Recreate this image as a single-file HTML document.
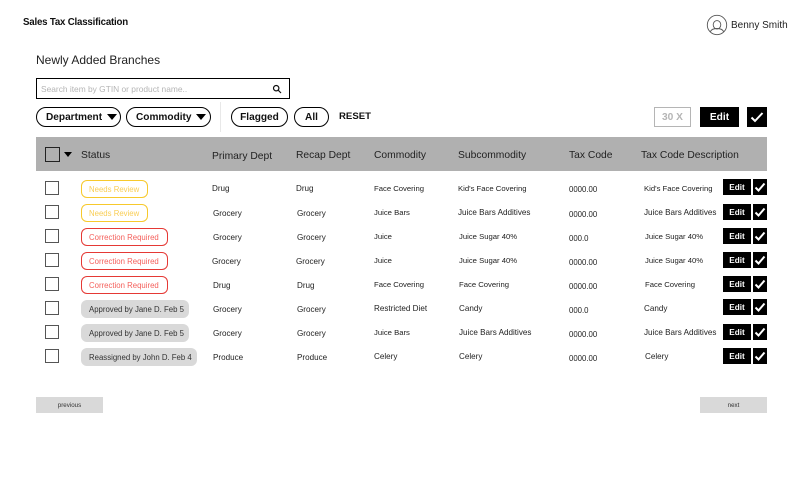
<!DOCTYPE html>
<html><head><meta charset="utf-8"><style>
html,body{margin:0;padding:0;background:#fff}
body{position:relative;width:804px;height:488px;overflow:hidden;font-family:"Liberation Sans",sans-serif;color:#111}
div,span{position:absolute;box-sizing:border-box;white-space:nowrap}
.t{font-size:8.1px;line-height:12px;height:12px;color:#222;margin-top:1px}
.s{font-size:7.7px}
.d{font-size:7.8px}
.h{font-size:10.3px;line-height:14px;height:14px;color:#222;top:148px;margin-top:1px}
.cb{left:45px;width:14px;height:14px;border:1px solid #555;background:#fff}
.p{left:81px;height:18px;border-radius:6px;font-size:7.8px;line-height:17px;padding-left:7px}
.y{width:67px;border:1px solid #f7c92c;color:#f9ce55}
.r{width:87px;border:1px solid #e53935;color:#f4605c}
.g{background:#d9d9d9;color:#333;line-height:19px;padding-left:8px}
.f{top:107px;height:20px;border:1px solid #000;border-radius:10px;font-size:10.1px;font-weight:bold;line-height:20px;text-align:center;color:#111}
.l{font-size:10.1px;font-weight:bold;line-height:14px;color:#111;top:111px}
.c{width:0;height:0;border-left:5px solid transparent;border-right:5px solid transparent;border-top:6px solid #000}
.e{left:723px;width:28px;height:16px;background:#000;color:#fff;font-size:8.2px;font-weight:bold;line-height:17px;text-align:center}
.k{left:753px;width:14px;height:16px;background:#000}
.k svg{position:absolute;left:1px;top:2px}
.n{top:397px;height:16px;width:67px;background:#d9d9d9;font-size:6.2px;line-height:17px;text-align:center;color:#333}
</style></head><body>
<div style="left:23px;top:16px;font-size:9.7px;line-height:14px;font-weight:bold;color:#111;letter-spacing:-.02em">Sales Tax Classification</div>
<div style="left:36px;top:52px;font-size:12px;line-height:16px;color:#222">Newly Added Branches</div>
<svg style="position:absolute;left:706px;top:14px" width="22" height="22" viewBox="0 0 22 22" fill="none" stroke="#555" stroke-width=".9"><circle cx="11" cy="11" r="9.7"/><ellipse cx="11" cy="10.8" rx="3.8" ry="4.200"/><path d="M4.300 17.800c1-2.600 3.500-3.300 6.700-3.300s5.700.700 6.700 3.300"/></svg>
<div style="left:731px;top:19px;font-size:10px;line-height:14px;color:#222">Benny Smith</div>

<div style="left:36px;top:78px;width:254px;height:21px;border:1px solid #000"></div>
<div style="left:41px;top:83px;font-size:8.4px;line-height:12px;color:#b5b5b5">Search item by GTIN or product name..</div>
<svg style="position:absolute;left:272px;top:84px" width="10" height="10" viewBox="0 0 10 10" fill="none" stroke="#111" stroke-width="1.200"><circle cx="4.200" cy="4.200" r="2.700"/><path d="M6.200 6.200L9 9"/></svg>

<div class="f" style="left:36px;width:85px"></div><span class="l" style="left:46px">Department</span><div class="c" style="left:107px;top:114px"></div>
<div class="f" style="left:126px;width:85px"></div><span class="l" style="left:136px">Commodity</span><div class="c" style="left:196px;top:114px"></div>
<div style="left:220px;top:102px;width:1px;height:30px;background:#e8e8e8"></div>
<div class="f" style="left:231px;width:57px">Flagged</div>
<div class="f" style="left:294px;width:35px">All</div>
<div style="left:339px;top:110px;font-size:9.6px;font-weight:bold;line-height:14px;color:#111">RESET</div>

<div style="left:654px;top:107px;width:37px;height:20px;border:1px solid #b5b5b5;color:#b5b5b5;font-size:10.200px;font-weight:bold;line-height:20px;text-align:center">30 X</div>
<div style="left:700px;top:107px;width:39px;height:20px;background:#000;color:#fff;font-size:10.200px;font-weight:bold;line-height:22px;text-align:center">Edit</div>
<div style="left:747px;top:107px;width:20px;height:20px;background:#000"><svg style="position:absolute;left:3px;top:3px" width="14" height="14" viewBox="0 0 14 14" fill="none" stroke="#fff" stroke-width="2"><path d="M1.500 7.500L5 11L12.500 3"/></svg></div>

<div style="left:36px;top:137px;width:731px;height:34px;background:#b0b0b0"></div>
<div style="left:45px;top:147px;width:15px;height:15px;border:1px solid #222"></div>
<div class="c" style="left:64px;top:152px;border-left-width:4.500px;border-right-width:4.500px;border-top-width:5px"></div>
<span class="h" style="left:81px">Status</span>
<span class="h" style="left:212px;top:149px">Primary Dept</span>
<span class="h" style="left:296px">Recap Dept</span>
<span class="h" style="left:374px">Commodity</span>
<span class="h" style="left:458px">Subcommodity</span>
<span class="h" style="left:569px">Tax Code</span>
<span class="h" style="left:641px">Tax Code Description</span>

<div class="cb" style="top:181px"></div><div class="cb" style="top:205px"></div><div class="cb" style="top:229px"></div><div class="cb" style="top:253px"></div><div class="cb" style="top:277px"></div><div class="cb" style="top:301px"></div><div class="cb" style="top:325px"></div><div class="cb" style="top:349px"></div>

<div class="p y" style="top:180px">Needs Review</div>
<div class="p y" style="top:204px">Needs Review</div>
<div class="p r" style="top:228px">Correction Required</div>
<div class="p r" style="top:252px">Correction Required</div>
<div class="p r" style="top:276px">Correction Required</div>
<div class="p g" style="top:300px;width:108px">Approved by Jane D. Feb 5</div>
<div class="p g" style="top:324px;width:108px">Approved by Jane D. Feb 5</div>
<div class="p g" style="top:348px;width:116px">Reassigned by John D. Feb 4</div>

<span class="t" style="left:212px;top:182px">Drug</span>
<span class="t" style="left:213px;top:207px">Grocery</span>
<span class="t" style="left:213px;top:231px">Grocery</span>
<span class="t" style="left:212px;top:255px">Grocery</span>
<span class="t" style="left:213px;top:279px">Drug</span>
<span class="t" style="left:213px;top:303px">Grocery</span>
<span class="t" style="left:213px;top:327px">Grocery</span>
<span class="t" style="left:213px;top:351px">Produce</span>

<span class="t" style="left:296px;top:182px">Drug</span>
<span class="t" style="left:297px;top:207px">Grocery</span>
<span class="t" style="left:297px;top:231px">Grocery</span>
<span class="t" style="left:296px;top:255px">Grocery</span>
<span class="t" style="left:297px;top:279px">Drug</span>
<span class="t" style="left:297px;top:303px">Grocery</span>
<span class="t" style="left:297px;top:327px">Grocery</span>
<span class="t" style="left:297px;top:351px">Produce</span>

<span class="t s" style="left:374px;top:182px">Face Covering</span>
<span class="t s" style="left:374px;top:206px">Juice Bars</span>
<span class="t s" style="left:374px;top:230px">Juice</span>
<span class="t s" style="left:374px;top:254px">Juice</span>
<span class="t s" style="left:374px;top:278px">Face Covering</span>
<span class="t" style="left:374px;top:302px">Restricted Diet</span>
<span class="t s" style="left:374px;top:326px">Juice Bars</span>
<span class="t" style="left:374px;top:350px">Celery</span>

<span class="t s" style="left:458px;top:182px">Kid's Face Covering</span>
<span class="t" style="left:458px;top:206px">Juice Bars Additives</span>
<span class="t s" style="left:459px;top:230px">Juice Sugar 40%</span>
<span class="t s" style="left:459px;top:254px">Juice Sugar 40%</span>
<span class="t s" style="left:459px;top:278px">Face Covering</span>
<span class="t" style="left:459px;top:302px">Candy</span>
<span class="t" style="left:459px;top:326px">Juice Bars Additives</span>
<span class="t" style="left:459px;top:350px">Celery</span>

<span class="t d" style="left:569px;top:183px">0000.00</span>
<span class="t d" style="left:569px;top:208px">0000.00</span>
<span class="t d" style="left:569px;top:232px">000.0</span>
<span class="t d" style="left:569px;top:256px">0000.00</span>
<span class="t d" style="left:569px;top:280px">0000.00</span>
<span class="t d" style="left:569px;top:304px">000.0</span>
<span class="t d" style="left:569px;top:328px">0000.00</span>
<span class="t d" style="left:569px;top:352px">0000.00</span>

<span class="t s" style="left:644px;top:182px">Kid's Face Covering</span>
<span class="t" style="left:644px;top:206px">Juice Bars Additives</span>
<span class="t s" style="left:645px;top:230px">Juice Sugar 40%</span>
<span class="t s" style="left:645px;top:254px">Juice Sugar 40%</span>
<span class="t s" style="left:645px;top:278px">Face Covering</span>
<span class="t" style="left:644px;top:302px">Candy</span>
<span class="t" style="left:644px;top:326px">Juice Bars Additives</span>
<span class="t" style="left:645px;top:350px">Celery</span>

<div class="e" style="top:179px">Edit</div><div class="k" style="top:179px"><svg width="12" height="12" viewBox="0 0 12 12" fill="none" stroke="#fff" stroke-width="2"><path d="M1.500 6.500L4.500 9.500L10.500 2.500"/></svg></div>
<div class="e" style="top:204px">Edit</div><div class="k" style="top:204px"><svg width="12" height="12" viewBox="0 0 12 12" fill="none" stroke="#fff" stroke-width="2"><path d="M1.500 6.500L4.500 9.500L10.500 2.500"/></svg></div>
<div class="e" style="top:228px">Edit</div><div class="k" style="top:228px"><svg width="12" height="12" viewBox="0 0 12 12" fill="none" stroke="#fff" stroke-width="2"><path d="M1.500 6.500L4.500 9.500L10.500 2.500"/></svg></div>
<div class="e" style="top:252px">Edit</div><div class="k" style="top:252px"><svg width="12" height="12" viewBox="0 0 12 12" fill="none" stroke="#fff" stroke-width="2"><path d="M1.500 6.500L4.500 9.500L10.500 2.500"/></svg></div>
<div class="e" style="top:276px">Edit</div><div class="k" style="top:276px"><svg width="12" height="12" viewBox="0 0 12 12" fill="none" stroke="#fff" stroke-width="2"><path d="M1.500 6.500L4.500 9.500L10.500 2.500"/></svg></div>
<div class="e" style="top:299px">Edit</div><div class="k" style="top:299px"><svg width="12" height="12" viewBox="0 0 12 12" fill="none" stroke="#fff" stroke-width="2"><path d="M1.500 6.500L4.500 9.500L10.500 2.500"/></svg></div>
<div class="e" style="top:324px">Edit</div><div class="k" style="top:324px"><svg width="12" height="12" viewBox="0 0 12 12" fill="none" stroke="#fff" stroke-width="2"><path d="M1.500 6.500L4.500 9.500L10.500 2.500"/></svg></div>
<div class="e" style="top:348px">Edit</div><div class="k" style="top:348px"><svg width="12" height="12" viewBox="0 0 12 12" fill="none" stroke="#fff" stroke-width="2"><path d="M1.500 6.500L4.500 9.500L10.500 2.500"/></svg></div>

<div class="n" style="left:36px">previous</div>
<div class="n" style="left:700px">next</div>
</body></html>
